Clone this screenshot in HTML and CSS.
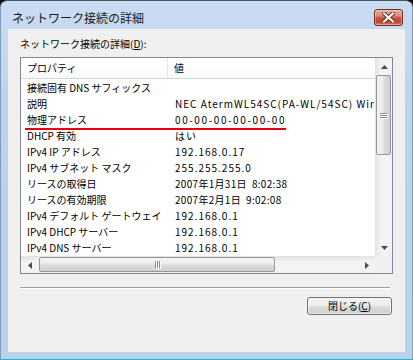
FILE: index.html
```html
<!DOCTYPE html>
<html lang="ja">
<head>
    <meta charset="UTF-8">
    <meta name="viewport" content="width=device-width, initial-scale=1.0">
    <title>ネットワーク接続の詳細</title>
    <link rel="stylesheet" href="styles.css">
</head>
<body>
    <div class="window">
        <!-- Barra de título -->
        <div class="titlebar">
            <span class="title">ネットワーク接続の詳細</span>
            <button class="close-btn" aria-label="閉じる">
                <svg width="13" height="11" viewBox="0 0 13 11">
                    <path d="M2 1.5 L11 9.5 M11 1.5 L2 9.5" stroke="#6b2a20" stroke-width="4" stroke-linecap="square"/>
                    <path d="M2 1.5 L11 9.5 M11 1.5 L2 9.5" stroke="#ffffff" stroke-width="2.2" stroke-linecap="square"/>
                </svg>
            </button>
        </div>

        <div class="client">
            <div class="group-label">ネットワーク接続の詳細(<u>D</u>):</div>

            <div class="listview">
                <div class="list-content">
                    <div class="list-header">
                        <div class="col col-prop">プロパティ</div>
                        <div class="col col-val">値</div>
                    </div>
                    <div class="rows">
                        <div class="row"><div class="col col-prop">接続固有 DNS サフィックス</div><div class="col col-val"></div></div>
                        <div class="row"><div class="col col-prop">説明</div><div class="col col-val">NEC AtermWL54SC(PA-WL/54SC) Wireless Network Adapter</div></div>
                        <div class="row"><div class="col col-prop">物理アドレス</div><div class="col col-val col-wide">00-00-00-00-00-00</div></div>
                        <div class="row"><div class="col col-prop">DHCP 有効</div><div class="col col-val">はい</div></div>
                        <div class="row"><div class="col col-prop">IPv4 IP アドレス</div><div class="col col-val">192.168.0.17</div></div>
                        <div class="row"><div class="col col-prop">IPv4 サブネット マスク</div><div class="col col-val">255.255.255.0</div></div>
                        <div class="row"><div class="col col-prop">リースの取得日</div><div class="col col-val col-date">2007年1月31日&nbsp; 8:02:38</div></div>
                        <div class="row"><div class="col col-prop">リースの有効期限</div><div class="col col-val col-date">2007年2月1日&nbsp; 9:02:08</div></div>
                        <div class="row"><div class="col col-prop">IPv4 デフォルト ゲートウェイ</div><div class="col col-val">192.168.0.1</div></div>
                        <div class="row"><div class="col col-prop">IPv4 DHCP サーバー</div><div class="col col-val">192.168.0.1</div></div>
                        <div class="row"><div class="col col-prop">IPv4 DNS サーバー</div><div class="col col-val">192.168.0.1</div></div>
                    </div>
                    <!-- Marca roja bajo la dirección física -->
                    <div class="mark"></div>
                </div>

                <div class="vscroll">
                    <div class="sb-arrow">
                        <svg width="7" height="4" viewBox="0 0 7 4"><polygon points="3.5,0 7,4 0,4" fill="#4a4a4a"/></svg>
                    </div>
                    <div class="sb-thumb sb-thumb-v">
                        <span class="grip"></span><span class="grip"></span><span class="grip"></span>
                    </div>
                    <div class="sb-track"></div>
                    <div class="sb-arrow">
                        <svg width="7" height="4" viewBox="0 0 7 4"><polygon points="0,0 7,0 3.5,4" fill="#4a4a4a"/></svg>
                    </div>
                </div>

                <div class="hscroll">
                    <div class="sb-arrow">
                        <svg width="4" height="7" viewBox="0 0 4 7"><polygon points="4,0 4,7 0,3.5" fill="#4a4a4a"/></svg>
                    </div>
                    <div class="sb-thumb sb-thumb-h">
                        <span class="grip"></span><span class="grip"></span><span class="grip"></span>
                    </div>
                    <div class="sb-track"></div>
                    <div class="sb-arrow">
                        <svg width="4" height="7" viewBox="0 0 4 7"><polygon points="0,0 4,3.5 0,7" fill="#4a4a4a"/></svg>
                    </div>
                </div>

                <div class="corner"></div>
            </div>

            <div class="separator"></div>

            <div class="actions">
                <button class="btn">閉じる(<u>C</u>)</button>
            </div>
        </div>
    </div>
</body>
</html>
```

FILE: styles.css
```css
* {
    margin: 0;
    padding: 0;
    box-sizing: border-box;
}

body {
    font-family: "Noto Sans CJK JP", "Liberation Sans", sans-serif;
    background: #000;
    width: 413px;
    height: 360px;
    overflow: hidden;
    color: #000;
}

.window {
    width: 413px;
    height: 360px;
    border: 1px solid #7f9bbd;
    border-top-color: #4a5666;
    border-bottom-color: #22b8cc;
    border-radius: 7px 7px 0 0;
    background: linear-gradient(180deg, #cadcf2 0%, #bcd3ee 30%, #b9d1ea 100%);
    padding-bottom: 7px;
}

/* Barra de título */
.titlebar {
    height: 28px;
    padding: 5px 9px 0 11px;
    display: flex;
    align-items: center;
    justify-content: space-between;
}

.title {
    font-size: 12px;
    line-height: 23px;
    color: #1a1a1a;
}

.close-btn {
    width: 29px;
    height: 17px;
    border: 1px solid #6d2b22;
    border-radius: 3px;
    background: linear-gradient(180deg, #e8ab9c 0%, #d98a78 40%, #c8553f 52%, #c0452e 78%, #d67a5f 100%);
    box-shadow: inset 0 0 0 1px rgba(255, 255, 255, 0.35);
    display: flex;
    align-items: center;
    justify-content: center;
}

.close-btn svg {
    display: block;
}

/* Área cliente */
.client {
    margin: 0 7px;
    height: 323px;
    background: #f0f0f0;
    padding: 8px 12px 0 12px;
}

.group-label {
    font-size: 10px;
    line-height: 14px;
    height: 14px;
    margin-bottom: 6px;
}

.listview {
    width: 373px;
    height: 217px;
    border: 1px solid #828790;
    background: #fff;
    display: grid;
    grid-template-columns: 354px 17px;
    grid-template-rows: 198px 17px;
}

.list-content {
    position: relative;
    overflow: hidden;
    font-size: 10px;
}

.list-header {
    display: flex;
    height: 21px;
    border-bottom: 1px solid #d5d5d5;
    background: linear-gradient(180deg, #ffffff 0%, #ffffff 50%, #f7f8fa 100%);
    line-height: 20px;
}

.list-header .col-prop {
    border-right: 1px solid #e3e8ee;
}

.rows {
    padding-top: 1px;
}

.row {
    display: flex;
    height: 16px;
    line-height: 16px;
}

.col {
    white-space: nowrap;
}

.col-prop {
    width: 147px;
    flex: none;
    padding-left: 6px;
}

.col-val {
    padding-left: 7px;
    letter-spacing: 1px;
}

.col-wide {
    letter-spacing: 1.6px;
}

.col-date {
    letter-spacing: 0.3px;
}

.list-header .col-val {
    padding-left: 6px;
    letter-spacing: 0;
}

.mark {
    position: absolute;
    left: 4px;
    top: 70px;
    width: 261px;
    height: 2px;
    background: #e60012;
}

/* Barras de desplazamiento */
.vscroll,
.hscroll {
    display: flex;
    background: linear-gradient(90deg, #e6e6e6 0%, #f3f3f3 30%, #f3f3f3 100%);
}

.vscroll {
    flex-direction: column;
    border-left: 1px solid #e2e2e2;
}

.hscroll {
    background: linear-gradient(180deg, #e6e6e6 0%, #f3f3f3 30%, #f3f3f3 100%);
    border-top: 1px solid #e2e2e2;
}

.sb-arrow {
    flex: none;
    display: flex;
    align-items: center;
    justify-content: center;
}

.vscroll .sb-arrow {
    width: 16px;
    height: 17px;
}

.hscroll .sb-arrow {
    width: 17px;
    height: 16px;
}

.sb-track {
    flex: 1;
}

.sb-thumb {
    flex: none;
    border: 1px solid #979797;
    border-radius: 2px;
    display: flex;
    align-items: center;
    justify-content: center;
    gap: 1px;
}

.sb-thumb-v {
    height: 80px;
    width: 15px;
    flex-direction: column;
    background: linear-gradient(90deg, #f4f4f4 0%, #ececec 45%, #dcdcdc 55%, #cfcfcf 100%);
}

.sb-thumb-h {
    width: 236px;
    height: 15px;
    margin-left: 1px;
    background: linear-gradient(180deg, #f4f4f4 0%, #ececec 45%, #dcdcdc 55%, #cfcfcf 100%);
}

.grip {
    display: block;
    background: #8a8a8a;
    box-shadow: 1px 1px 0 #fff;
}

.sb-thumb-v .grip {
    width: 7px;
    height: 1px;
}

.sb-thumb-h .grip {
    width: 1px;
    height: 7px;
}

.corner {
    background: #f0f0f0;
}

/* Separador y botón */
.separator {
    width: 370px;
    height: 2px;
    margin-top: 13px;
    border-top: 1px solid #a0a0a0;
    border-bottom: 1px solid #ffffff;
}

.actions {
    display: flex;
    justify-content: flex-end;
    width: 372px;
    margin-top: 8px;
}

.btn {
    width: 85px;
    height: 18px;
    border: 1px solid #707070;
    border-radius: 3px;
    background: linear-gradient(180deg, #f2f2f2 0%, #ebebeb 48%, #dddddd 52%, #cfcfcf 100%);
    box-shadow: inset 0 0 0 1px rgba(255, 255, 255, 0.6);
    font-family: inherit;
    font-size: 10px;
    line-height: 16px;
    color: #000;
}
```
